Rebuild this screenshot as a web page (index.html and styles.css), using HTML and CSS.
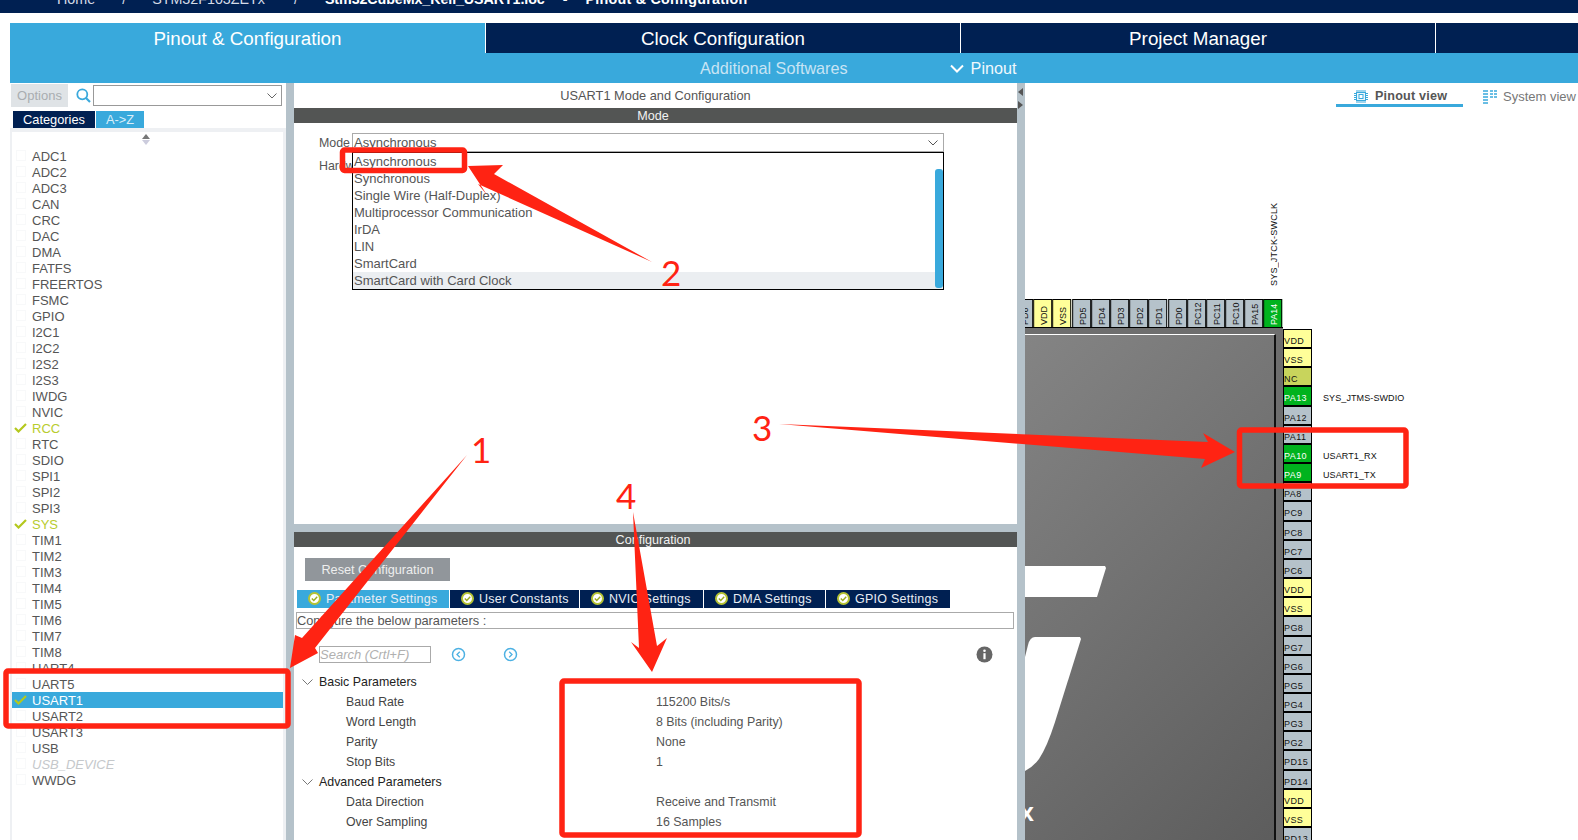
FILE: index.html
```html
<!DOCTYPE html>
<html lang="en">
<head>
    <meta charset="UTF-8">
    <title>STM32CubeMX</title>
    <link rel="stylesheet" href="styles.css">
</head>
<body>
    <div class="crumbbar">
        <div class="crumbs">
            <span class="crumb-home">Home</span>
            <span class="crumb-sep1">/</span>
            <span class="crumb-mcu">STM32F103ZETx</span>
            <span class="crumb-sep2">/</span>
            <b class="crumb-file">Stm32CubeMx_Keil_USART1.ioc</b>
            <b class="crumb-dash">-</b>
            <b class="crumb-page">Pinout &amp; Configuration</b>
        </div>
    </div>

    <div class="tabs">
        <div class="tab tab-active">Pinout &amp; Configuration</div>
        <div class="tab">Clock Configuration</div>
        <div class="tab">Project Manager</div>
        <div class="tab tab-rest"></div>
    </div>
    <div class="subbar">
        <span class="sub-extra">Additional Softwares</span>
        <svg class="sub-chev" width="14" height="9" viewBox="0 0 14 9"><path d="M1 1.5 7 7.5 13 1.5" fill="none" stroke="#fff" stroke-width="2"/></svg>
        <span class="sub-pinout">Pinout</span>
    </div>

    <div class="main">
        <!-- component list -->
        <div class="left">
            <div class="opt-row">
                <div class="opt-btn">Options</div>
                <svg class="opt-search" width="15" height="15" viewBox="0 0 15 15"><circle cx="6.3" cy="6.3" r="5" fill="none" stroke="#3aa9dc" stroke-width="1.8"/><path d="M10 10 14 14" stroke="#3aa9dc" stroke-width="2.2"/></svg>
                <div class="opt-combo"><svg width="10" height="6" viewBox="0 0 10 6"><path d="M.5.5 5 5 9.5.5" fill="none" stroke="#666"/></svg></div>
            </div>
            <div class="cat-tabs">
                <div class="cat-tab cat-dark">Categories</div>
                <div class="cat-tab cat-blue">A-&gt;Z</div>
            </div>
            <div class="list">
                <div class="sorter"><i class="sort-up"></i><i class="sort-down"></i></div>
                <div class="item"><i class="mark"></i>ADC1</div>
                <div class="item"><i class="mark"></i>ADC2</div>
                <div class="item"><i class="mark"></i>ADC3</div>
                <div class="item"><i class="mark"></i>CAN</div>
                <div class="item"><i class="mark"></i>CRC</div>
                <div class="item"><i class="mark"></i>DAC</div>
                <div class="item"><i class="mark"></i>DMA</div>
                <div class="item"><i class="mark"></i>FATFS</div>
                <div class="item"><i class="mark"></i>FREERTOS</div>
                <div class="item"><i class="mark"></i>FSMC</div>
                <div class="item"><i class="mark"></i>GPIO</div>
                <div class="item"><i class="mark"></i>I2C1</div>
                <div class="item"><i class="mark"></i>I2C2</div>
                <div class="item"><i class="mark"></i>I2S2</div>
                <div class="item"><i class="mark"></i>I2S3</div>
                <div class="item"><i class="mark"></i>IWDG</div>
                <div class="item"><i class="mark"></i>NVIC</div>
                <div class="item item-on"><svg class="tick" width="13" height="10" viewBox="0 0 13 10"><path d="M1 5 4.5 8.5 12 1" fill="none" stroke="#b4c81e" stroke-width="2.2"/></svg>RCC</div>
                <div class="item"><i class="mark"></i>RTC</div>
                <div class="item"><i class="mark"></i>SDIO</div>
                <div class="item"><i class="mark"></i>SPI1</div>
                <div class="item"><i class="mark"></i>SPI2</div>
                <div class="item"><i class="mark"></i>SPI3</div>
                <div class="item item-on"><svg class="tick" width="13" height="10" viewBox="0 0 13 10"><path d="M1 5 4.5 8.5 12 1" fill="none" stroke="#b4c81e" stroke-width="2.2"/></svg>SYS</div>
                <div class="item"><i class="mark"></i>TIM1</div>
                <div class="item"><i class="mark"></i>TIM2</div>
                <div class="item"><i class="mark"></i>TIM3</div>
                <div class="item"><i class="mark"></i>TIM4</div>
                <div class="item"><i class="mark"></i>TIM5</div>
                <div class="item"><i class="mark"></i>TIM6</div>
                <div class="item"><i class="mark"></i>TIM7</div>
                <div class="item"><i class="mark"></i>TIM8</div>
                <div class="item"><i class="mark"></i>UART4</div>
                <div class="item"><i class="mark"></i>UART5</div>
                <div class="item item-sel"><svg class="tick" width="13" height="10" viewBox="0 0 13 10"><path d="M1 5 4.5 8.5 12 1" fill="none" stroke="#b4c81e" stroke-width="2.2"/></svg>USART1</div>
                <div class="item"><i class="mark"></i>USART2</div>
                <div class="item"><i class="mark"></i>USART3</div>
                <div class="item"><i class="mark"></i>USB</div>
                <div class="item item-off"><i class="mark"></i>USB_DEVICE</div>
                <div class="item"><i class="mark"></i>WWDG</div>
            </div>
        </div>

        <div class="splitter"></div>

        <!-- mode and configuration -->
        <div class="center">
            <div class="mode-pane">
                <div class="pane-title">USART1 Mode and Configuration</div>
                <div class="band">Mode</div>
                <div class="mode-body">
                    <div class="mode-row">
                        <span class="mode-label">Mode</span>
                        <div class="mode-combo">
                            Asynchronous
                            <svg width="10" height="6" viewBox="0 0 10 6"><path d="M.5.5 5 5 9.5.5" fill="none" stroke="#555"/></svg>
                        </div>
                    </div>
                    <div class="mode-row mode-row2">
                        <span class="mode-label">Hardware Flow Control</span>
                    </div>
                    <div class="popup">
                        <div class="popup-item">Asynchronous</div>
                        <div class="popup-item">Synchronous</div>
                        <div class="popup-item">Single Wire (Half-Duplex)</div>
                        <div class="popup-item">Multiprocessor Communication</div>
                        <div class="popup-item">IrDA</div>
                        <div class="popup-item">LIN</div>
                        <div class="popup-item">SmartCard</div>
                        <div class="popup-item popup-hover">SmartCard with Card Clock</div>
                        <div class="popup-scroll"></div>
                    </div>
                </div>
            </div>
            <div class="hsplit"></div>
            <div class="config-pane">
                <div class="band">Configuration</div>
                <div class="reset-btn">Reset Configuration</div>
                <div class="cfg-tabs">
                    <div class="cfg-tab cfg-active cfg-w1"><svg class="ok" width="13" height="13" viewBox="0 0 13 13"><circle cx="6.5" cy="6.5" r="5.5" fill="#fff" stroke="#b5c334" stroke-width="2"/><path d="M3.8 6.5 5.8 8.5 9.2 4.8" fill="none" stroke="#9aab1e" stroke-width="1.4"/></svg>Parameter Settings</div>
                    <div class="cfg-tab cfg-w2"><svg class="ok" width="13" height="13" viewBox="0 0 13 13"><circle cx="6.5" cy="6.5" r="5.5" fill="#fff" stroke="#b5c334" stroke-width="2"/><path d="M3.8 6.5 5.8 8.5 9.2 4.8" fill="none" stroke="#9aab1e" stroke-width="1.4"/></svg>User Constants</div>
                    <div class="cfg-tab cfg-w3"><svg class="ok" width="13" height="13" viewBox="0 0 13 13"><circle cx="6.5" cy="6.5" r="5.5" fill="#fff" stroke="#b5c334" stroke-width="2"/><path d="M3.8 6.5 5.8 8.5 9.2 4.8" fill="none" stroke="#9aab1e" stroke-width="1.4"/></svg>NVIC Settings</div>
                    <div class="cfg-tab cfg-w4"><svg class="ok" width="13" height="13" viewBox="0 0 13 13"><circle cx="6.5" cy="6.5" r="5.5" fill="#fff" stroke="#b5c334" stroke-width="2"/><path d="M3.8 6.5 5.8 8.5 9.2 4.8" fill="none" stroke="#9aab1e" stroke-width="1.4"/></svg>DMA Settings</div>
                    <div class="cfg-tab cfg-w5"><svg class="ok" width="13" height="13" viewBox="0 0 13 13"><circle cx="6.5" cy="6.5" r="5.5" fill="#fff" stroke="#b5c334" stroke-width="2"/><path d="M3.8 6.5 5.8 8.5 9.2 4.8" fill="none" stroke="#9aab1e" stroke-width="1.4"/></svg>GPIO Settings</div>
                </div>
                <div class="desc">Configure the below parameters :</div>
                <div class="search-row">
                    <div class="search-box">Search (Crtl+F)</div>
                    <svg class="nav-prev" width="15" height="15" viewBox="0 0 15 15"><circle cx="7.5" cy="7.5" r="6" fill="none" stroke="#4db1e3" stroke-width="1.5"/><path d="M8.8 4.8 6 7.5 8.8 10.2" fill="none" stroke="#4db1e3" stroke-width="1.3"/></svg>
                    <svg class="nav-next" width="15" height="15" viewBox="0 0 15 15"><circle cx="7.5" cy="7.5" r="6" fill="none" stroke="#4db1e3" stroke-width="1.5"/><path d="M6.2 4.8 9 7.5 6.2 10.2" fill="none" stroke="#4db1e3" stroke-width="1.3"/></svg>
                    <svg class="info" width="17" height="17" viewBox="0 0 17 17"><circle cx="8.5" cy="8.5" r="8" fill="#666"/><circle cx="8.5" cy="4.8" r="1.3" fill="#fff"/><rect x="7.4" y="7.2" width="2.2" height="6" fill="#fff"/></svg>
                </div>
                <div class="tree">
                    <div class="tree-row tree-group"><span><svg width="11" height="6" viewBox="0 0 11 6"><path d="M.5.5 5.5 5.5 10.5.5" fill="none" stroke="#777"/></svg>Basic Parameters</span><span></span></div>
                    <div class="tree-row"><span>Baud Rate</span><span>115200 Bits/s</span></div>
                    <div class="tree-row"><span>Word Length</span><span>8 Bits (including Parity)</span></div>
                    <div class="tree-row"><span>Parity</span><span>None</span></div>
                    <div class="tree-row"><span>Stop Bits</span><span>1</span></div>
                    <div class="tree-row tree-group"><span><svg width="11" height="6" viewBox="0 0 11 6"><path d="M.5.5 5.5 5.5 10.5.5" fill="none" stroke="#777"/></svg>Advanced Parameters</span><span></span></div>
                    <div class="tree-row"><span>Data Direction</span><span>Receive and Transmit</span></div>
                    <div class="tree-row"><span>Over Sampling</span><span>16 Samples</span></div>
                </div>
            </div>
        </div>

        <div class="splitter splitter-arrows"><i class="arrow-l"></i><i class="arrow-r"></i></div>

        <!-- pinout canvas -->
        <div class="right">
            <div class="view-tabs">
                <div class="view-tab view-active">
                    <svg width="14" height="15" viewBox="0 0 14 15"><path d="M3 1v2.500M5 1v2.500M7 1v2.500M9 1v2.500M11 1v2.500M3 11.500v2.500M5 11.500v2.500M7 11.500v2.500M9 11.500v2.500M11 11.500v2.500M0 4.500h2.500M0 6.500h2.500M0 8.500h2.500M0 10.500h2.500M11.500 4.500h2.500M11.500 6.500h2.500M11.500 8.500h2.500M11.500 10.500h2.500" stroke="#3aa9dc"/><rect x="2.500" y="3.500" width="9" height="8" fill="#eaf6fc" stroke="#3aa9dc"/><rect x="5" y="5.500" width="4" height="4" fill="#fff" stroke="#3aa9dc"/></svg>
                    Pinout view
                </div>
                <div class="view-tab view-system">
                    <svg width="14" height="15" viewBox="0 0 14 15"><path d="M0 2h5M0 5h5M0 8h5M0 11h5M0 14h5M7 2h3M11 2h3M7 5h3M11 5h3M7 8h3M11 8h3" stroke="#3aa9dc" stroke-width="1.6"/></svg>
                    System view
                </div>
            </div>

            <div class="sig-top">SYS_JTCK-SWCLK</div>
            <div class="pins-top">
                <div class="pin pin-grey">PD6</div>
                <div class="pin pin-power">VDD</div>
                <div class="pin pin-power">VSS</div>
                <div class="pin pin-grey">PD5</div>
                <div class="pin pin-grey">PD4</div>
                <div class="pin pin-grey">PD3</div>
                <div class="pin pin-grey">PD2</div>
                <div class="pin pin-grey">PD1</div>
                <div class="pin pin-grey">PD0</div>
                <div class="pin pin-grey">PC12</div>
                <div class="pin pin-grey">PC11</div>
                <div class="pin pin-grey">PC10</div>
                <div class="pin pin-grey">PA15</div>
                <div class="pin pin-green">PA14</div>
            </div>

            <div class="chip">
                <div class="chip-face"></div>
                <svg class="chip-logo" width="100" height="460" viewBox="0 0 100 460">
                    <path d="M0 239H80L81 241 72 270H0Z" fill="#fff"/>
                    <path d="M0 330 3 318Q5 310 10 310H55L56 312 30 395Q22 420 14 432 8 440 0 444Z" fill="#fff"/>
                </svg>
                <span class="chip-x">x</span>
            </div>

            <div class="pins-right">
                <div class="rpin pin-power">VDD</div>
                <div class="rpin pin-power">VSS</div>
                <div class="rpin pin-nc">NC</div>
                <div class="rpin pin-green">PA13<span class="sig">SYS_JTMS-SWDIO</span></div>
                <div class="rpin pin-grey">PA12</div>
                <div class="rpin pin-grey">PA11</div>
                <div class="rpin pin-green">PA10<span class="sig">USART1_RX</span></div>
                <div class="rpin pin-green">PA9<span class="sig">USART1_TX</span></div>
                <div class="rpin pin-grey">PA8</div>
                <div class="rpin pin-grey">PC9</div>
                <div class="rpin pin-grey">PC8</div>
                <div class="rpin pin-grey">PC7</div>
                <div class="rpin pin-grey">PC6</div>
                <div class="rpin pin-power">VDD</div>
                <div class="rpin pin-power">VSS</div>
                <div class="rpin pin-grey">PG8</div>
                <div class="rpin pin-grey">PG7</div>
                <div class="rpin pin-grey">PG6</div>
                <div class="rpin pin-grey">PG5</div>
                <div class="rpin pin-grey">PG4</div>
                <div class="rpin pin-grey">PG3</div>
                <div class="rpin pin-grey">PG2</div>
                <div class="rpin pin-grey">PD15</div>
                <div class="rpin pin-grey">PD14</div>
                <div class="rpin pin-power">VDD</div>
                <div class="rpin pin-power">VSS</div>
                <div class="rpin pin-grey">PD13</div>
            </div>
        </div>
    </div>

    <!-- red notes drawn on top of the screenshot -->
    <svg class="notes" width="1578" height="840" viewBox="0 0 1578 840">
        <g fill="none" stroke="#ff2313" stroke-width="5.5" stroke-linejoin="round">
            <rect x="6" y="671" width="282" height="55" rx="2"/>
            <rect x="342.5" y="150" width="122" height="20.5" rx="2"/>
            <rect x="1239.5" y="430" width="166.5" height="56" rx="2"/>
            <rect x="562" y="681" width="297" height="154" rx="2"/>
        </g>
        <g fill="#ff2313">
            <polygon points="290,668 295,635 302,638 467,455 315,648 318,653"/>
            <polygon points="468,166 503,165 494,174 652,262 478,184 487,195"/>
            <polygon points="1235,452 1203,433 1208,442 779,424 1205,459 1201,468"/>
            <polygon points="652,672 631,642 639,648 633,512 657,646 667,638"/>
        </g>
        <g class="note-num" fill="#ff2313">
            <text x="471" y="463">1</text>
            <text x="661" y="286">2</text>
            <text x="752" y="441">3</text>
            <text x="616" y="509">4</text>
        </g>
    </svg>
</body>
</html>
```

FILE: styles.css
```css
* {
    box-sizing: border-box;
}
html, body {
    margin: 0;
    padding: 0;
}
body {
    position: relative;
    width: 1578px;
    height: 840px;
    overflow: hidden;
    background: #ffffff;
    font-family: 'Liberation Sans', Arial, sans-serif;
    font-size: 13px;
    color: #555;
}
i {
    display: block;
}

/* breadcrumb, cut off by the top of the window */
.crumbbar {
    height: 13px;
    background: #002052;
    overflow: hidden;
    color: #d5dbe6;
    font-size: 14.3px;
}
.crumbs {
    display: flex;
    margin-top: -11px;
    line-height: 20px;
    padding-left: 57px;
    white-space: nowrap;
}
.crumbs b {
    color: #fff;
}
.crumb-sep1 { margin-left: 27px; }
.crumb-mcu { margin-left: 26px; }
.crumb-sep2 { margin-left: 29px; }
.crumb-file {
    margin-left: 27px;
    letter-spacing: -.1px;
}
.crumb-dash { margin-left: 18px; }
.crumb-page {
    margin-left: 18px;
    letter-spacing: .25px;
}

/* main tabs */
.tabs {
    display: flex;
    height: 30px;
    margin: 10px 0 0 10px;
}
.tab {
    width: 475px;
    padding-top: 1px;
    line-height: 30px;
    text-align: center;
    font-size: 18.8px;
    color: #fff;
    background: #002052;
    border-right: 1px solid #fff;
}
.tab-active {
    width: 476px;
    background: #39a9dc;
}
.tab-rest {
    flex: 1;
    border-right: none;
}
.subbar {
    display: flex;
    align-items: center;
    height: 30px;
    margin-left: 10px;
    padding: 1px 0 0 690px;
    background: #39a9dc;
    font-size: 16.2px;
}
.sub-extra {
    color: #c8e4f4;
}
.sub-chev {
    margin-left: 102px;
}
.sub-pinout {
    margin-left: 7px;
    color: #f0f8fc;
}

/* three panes */
.main {
    display: flex;
    height: 757px;
    margin-left: 10px;
}
.splitter {
    width: 8px;
    background: #b5c2ca;
}
.splitter-arrows {
    padding-top: 3px;
}
.arrow-l, .arrow-r {
    width: 0;
    height: 0;
    margin: 2px 0 5px 1px;
    border-top: 4px solid transparent;
    border-bottom: 4px solid transparent;
}
.arrow-l {
    border-right: 5px solid #555;
}
.arrow-r {
    border-left: 5px solid #555;
}

/* left pane */
.left {
    width: 276px;
    display: flex;
    flex-direction: column;
}
.opt-row {
    display: flex;
    height: 28px;
    padding: 1px 0 0 1px;
}
.opt-btn {
    width: 57px;
    height: 23px;
    line-height: 23px;
    text-align: center;
    background: #dfe3e6;
    color: #a9adb0;
}
.opt-search {
    margin: 4px 0 0 8px;
}
.opt-combo {
    display: flex;
    align-items: center;
    justify-content: flex-end;
    width: 189px;
    height: 21px;
    margin: 1px 0 0 2px;
    padding-right: 4px;
    border: 1px solid #999;
}
.cat-tabs {
    display: flex;
    height: 17px;
    padding-left: 3px;
    gap: 1px;
}
.cat-tab {
    line-height: 17px;
    text-align: center;
    color: #fff;
    font-size: 12.8px;
}
.cat-dark {
    width: 82px;
    background: #002052;
}
.cat-blue {
    width: 48px;
    background: #39a9dc;
    color: #d9eef9;
}
.list {
    flex: 1;
    border: solid #eef0f3;
    border-width: 4px 3px 0 2px;
}
.sorter {
    height: 16px;
    padding-top: 2px;
}
.sort-up, .sort-down {
    width: 0;
    height: 0;
    margin: 0 0 1px 130px;
    border-left: 4px solid transparent;
    border-right: 4px solid transparent;
}
.sort-up {
    border-bottom: 5px solid #777;
}
.sort-down {
    border-top: 5px solid #ccd;
}
.item {
    display: flex;
    align-items: center;
    height: 16px;
    padding: 1px 0 0 20px;
    line-height: 15px;
    position: relative;
    color: #555;
}
.mark {
    position: absolute;
    left: 4px;
    top: 2px;
    width: 10px;
    height: 11px;
    border: 1px solid #f8f9fa;
}
.tick {
    position: absolute;
    left: 2px;
    top: 3px;
}
.item-on {
    color: #b8cc2e;
}
.item-sel {
    background: #39a9dc;
    color: #fff;
}
.item-off {
    color: #c5c8cb;
    font-style: italic;
}

/* centre pane */
.center {
    width: 723px;
    display: flex;
    flex-direction: column;
}
.mode-pane {
    height: 441px;
}
.pane-title {
    height: 25px;
    line-height: 25px;
    text-align: center;
    font-size: 12.8px;
    color: #555;
}
.band {
    height: 15px;
    line-height: 16px;
    padding-right: 5px;
    text-align: center;
    background: #535554;
    color: #f2f2f2;
    font-size: 12.6px;
}
.mode-body {
    position: relative;
    padding-top: 10px;
}
.mode-row {
    display: flex;
    align-items: center;
    height: 19px;
    padding-left: 25px;
}
.mode-row2 {
    margin-top: 4px;
}
.mode-label {
    flex: none;
    width: 33px;
    white-space: nowrap;
    font-size: 12.4px;
}
.mode-combo {
    display: flex;
    align-items: center;
    justify-content: space-between;
    width: 592px;
    height: 19px;
    padding: 0 5px 0 1px;
    border: 1px solid #aaa;
}
.popup {
    position: absolute;
    left: 58px;
    top: 29px;
    width: 592px;
    height: 138px;
    background: #fff;
    border: 1px solid #000;
}
.popup-item {
    height: 17px;
    line-height: 17px;
    padding-left: 1px;
}
.popup-hover {
    background: #ebeef1;
}
.popup-scroll {
    position: absolute;
    right: 0;
    top: 16px;
    bottom: 1px;
    width: 8px;
    border-radius: 3px;
    background: #39a9dc;
}
.hsplit {
    height: 8px;
    background: #b5c2ca;
}
.config-pane {
    flex: 1;
}
.reset-btn {
    width: 145px;
    height: 23px;
    line-height: 24px;
    margin: 11px 0 0 11px;
    text-align: center;
    background: #91969b;
    color: #eee;
    font-size: 12.7px;
}
.cfg-tabs {
    display: flex;
    gap: 1px;
    height: 18px;
    margin: 9px 0 0 3px;
    font-size: 12.5px;
}
.cfg-tab {
    display: flex;
    align-items: center;
    gap: 5px;
    padding: 0 0 1px 11px;
    background: #002052;
    color: #e8edf4;
    letter-spacing: .25px;
}
.cfg-w1 { width: 152px; }
.cfg-w2 { width: 129px; }
.cfg-w3 { width: 123px; }
.cfg-w4 { width: 121px; }
.cfg-w5 { width: 124px; }
.cfg-active {
    background: #39a9dc;
}
.desc {
    width: 718px;
    height: 17px;
    line-height: 16px;
    margin: 4px 0 0 2px;
    border: 1px solid #aaa;
    font-size: 12.8px;
}
.search-row {
    display: flex;
    align-items: center;
    height: 17px;
    margin-top: 17px;
    padding-left: 25px;
}
.search-box {
    width: 112px;
    height: 17px;
    line-height: 15px;
    border: 1px solid #aaa;
    font-style: italic;
    color: #b0b0b0;
}
.nav-prev { margin-left: 20px; }
.nav-next { margin-left: 37px; }
.info { margin-left: 458px; }
.tree {
    margin-top: 9px;
}
.tree-row {
    display: grid;
    grid-template-columns: 362px 1fr;
    height: 20px;
    line-height: 20px;
    font-size: 12.4px;
}
.tree-row span:first-child {
    padding-left: 52px;
    font-size: 12.3px;
    color: #444;
}
.tree-group span:first-child {
    display: flex;
    align-items: center;
    gap: 6px;
    padding-left: 8px;
    font-size: 12.4px;
    color: #222;
}

/* pinout canvas */
.right {
    position: relative;
    flex: 1;
    overflow: hidden;
}
.view-tabs {
    display: flex;
    height: 24px;
    padding-left: 311px;
}
.view-tab {
    flex: none;
    display: flex;
    align-items: center;
    gap: 7px;
    height: 24px;
    padding-top: 2px;
    white-space: nowrap;
    color: #777;
}
.view-active {
    width: 127px;
    padding: 5px 0 0 18px;
    border-bottom: 3px solid #39a9dc;
    font-weight: bold;
    font-size: 12.6px;
    letter-spacing: .2px;
    color: #555;
}
.view-system {
    margin-left: 20px;
    gap: 6px;
}
.sig-top {
    position: absolute;
    left: 244px;
    top: 121px;
    height: 82px;
    writing-mode: vertical-rl;
    transform: rotate(180deg);
    font-size: 9px;
    letter-spacing: .2px;
    color: #111;
    white-space: nowrap;
}
.pins-top {
    position: absolute;
    left: -11px;
    top: 216px;
    display: flex;
}
.pin {
    width: 19.2px;
    height: 29px;
    border: 1px solid #000;
    padding: 2px 3px 0 0;
    writing-mode: vertical-rl;
    transform: rotate(180deg);
    font-size: 9px;
    line-height: 14px;
    color: #111;
}
.pin-grey { background: #b5c2ca; }
.pin-power { background: #ffff99; }
.pin-nc { background: #c8d45c; }
.pins-top .pin-green,
.pins-right .pin-green {
    background: #00b31e;
    color: #fff;
}
.chip {
    position: absolute;
    left: 0;
    top: 244px;
    width: 258px;
    height: 520px;
    background: #6e6e6e;
    border-top: 1px solid #000;
    overflow: hidden;
}
.chip-face {
    height: 100%;
    width: 251px;
    margin-top: 6px;
    border-top: 1px solid #fff;
    border-right: 2px solid #111;
    background: linear-gradient(135deg, #848484, #5c5c5c);
}
.chip-logo {
    position: absolute;
    left: 0;
    top: -1px;
}
.chip-x {
    position: absolute;
    left: -5px;
    top: 469px;
    font-size: 25px;
    line-height: 30px;
    font-weight: bold;
    color: #fff;
}
.pins-right {
    position: absolute;
    left: 258px;
    top: 246px;
    width: 29px;
}
.rpin {
    position: relative;
    height: 19.17px;
    border: 1px solid #000;
    font-size: 9px;
    line-height: 22px;
    color: #111;
    white-space: nowrap;
    letter-spacing: .4px;
}
.sig {
    position: absolute;
    left: 39px;
    top: 0;
    letter-spacing: .1px;
    color: #111;
}

/* red notes */
.notes {
    position: absolute;
    left: 0;
    top: 0;
    pointer-events: none;
}
.note-num text {
    font-family: Lato, sans-serif;
    font-size: 35px;
}
```
